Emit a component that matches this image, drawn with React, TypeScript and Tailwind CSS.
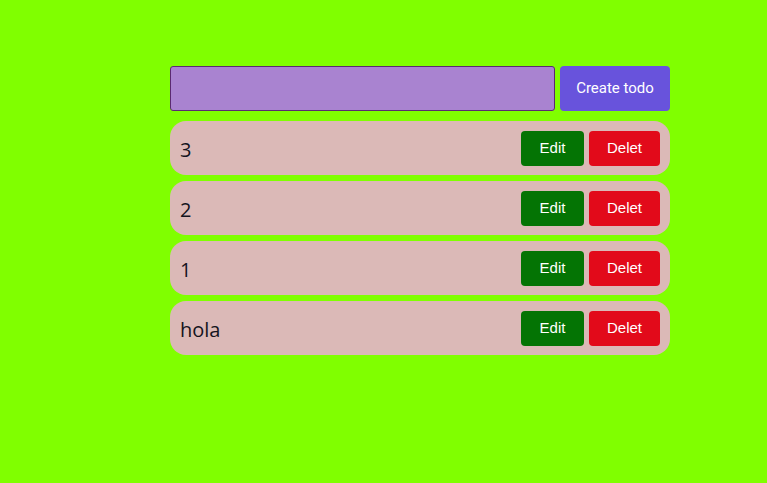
import { useState } from 'react'

interface Todo {
    id: number
    text: string
}

const App = () => {
    const [todos] = useState<Todo[]>([
        { id: 3, text: '3' },
        { id: 2, text: '2' },
        { id: 1, text: '1' },
        { id: 0, text: 'hola' },
    ])
    const [value, setValue] = useState('')

    return (
        <div className="min-h-[483px] w-full bg-[#80ff00] pt-[66px]">
            <div className="ml-[170px] flex w-[500px] flex-col gap-[6px]">
                <div className="mb-[4px] flex gap-[5px]">
                    <input
                        className="h-[45px] flex-1 rounded-[3px] border border-[#5b2a72] bg-[#a983d0] px-2 outline-none"
                        value={value}
                        onChange={(e) => setValue(e.target.value)}
                    />
                    <button className="h-[45px] w-[110px] rounded-[4px] bg-[#6853dc] font-['Roboto',sans-serif] text-[15px] text-white">
                        Create todo
                    </button>
                </div>
                {todos.map((todo) => (
                    <div key={todo.id} className="flex h-[54px] items-center rounded-[16px] bg-[#dbb9b7] pl-[10px] pr-[10px]">
                        <span className="flex-1 pt-[3px] font-['Open_Sans',sans-serif] text-[20px] text-[#141420]">{todo.text}</span>
                        <div className="flex gap-[5px]">
                            <button className="h-[35px] w-[63px] rounded-[4px] bg-[#047404] font-['Liberation_Sans',sans-serif] text-[15px] text-white">Edit</button>
                            <button className="h-[35px] w-[71px] rounded-[4px] bg-[#e20a1a] font-['Liberation_Sans',sans-serif] text-[15px] text-white">Delet</button>
                        </div>
                    </div>
                ))}
            </div>
        </div>
    )
}

export default App
